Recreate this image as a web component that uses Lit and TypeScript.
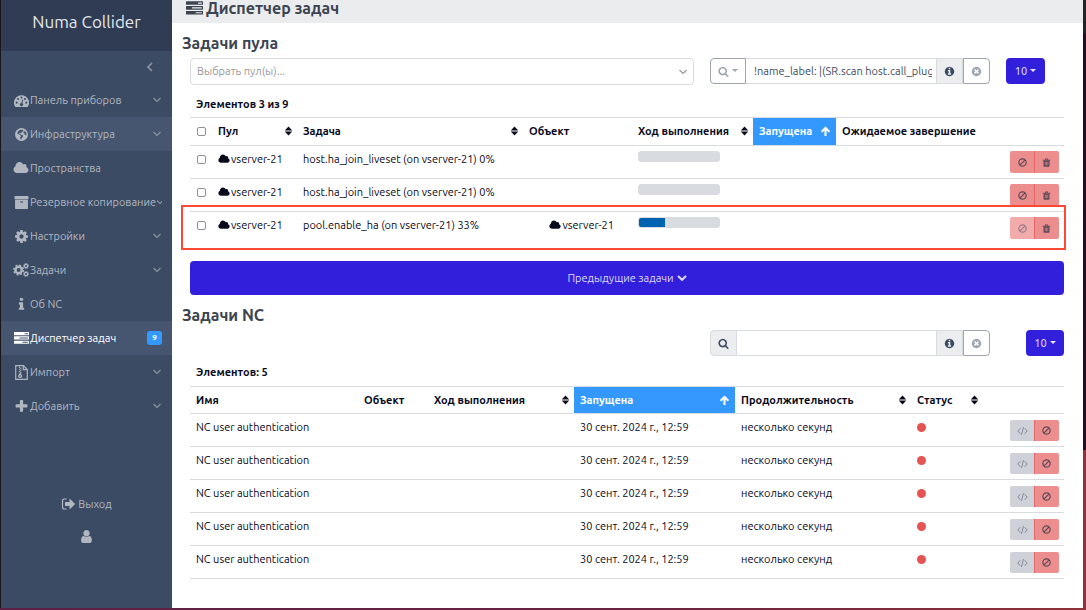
import { LitElement, html, css, svg, nothing } from "lit";
import { customElement, property } from "lit/decorators.js";
import { classMap } from "lit/directives/class-map.js";

const DISC = "M1664 896q0 209-103 385.5t-279.5 279.5-385.5 103-385.5-103-279.5-279.5-103-385.5 103-385.5 279.5-279.5 385.5-103 385.5 103 279.5 279.5 103 385.5z";

const ICONS: Record<string, { box?: string; art: unknown }> = {
  tasks: {
    art: svg`<path d="M1024 1408h640v-128h-640v128zm-384-512h1024v-128h-1024v128zm640-512h384v-128h-384v128zm512 832v256q0 26-19 45t-45 19h-1664q-26 0-45-19t-19-45v-256q0-26 19-45t45-19h1664q26 0 45 19t19 45zm0-512v256q0 26-19 45t-45 19h-1664q-26 0-45-19t-19-45v-256q0-26 19-45t45-19h1664q26 0 45 19t19 45zm0-512v256q0 26-19 45t-45 19h-1664q-26 0-45-19t-19-45v-256q0-26 19-45t45-19h1664q26 0 45 19t19 45z"/>`,
  },
  search: {
    art: svg`<path d="M1216 832q0-185-131.5-316.5t-316.5-131.5-316.5 131.5-131.5 316.5 131.5 316.5 316.5 131.5 316.5-131.5 131.5-316.5zm512 832q0 52-38 90t-90 38q-54 0-90-38l-343-342q-179 124-399 124-143 0-273.5-55.5t-225-150-150-225-55.5-273.5 55.5-273.5 150-225 225-150 273.5-55.5 273.5 55.5 225 150 150 225 55.5 273.5q0 220-124 399l343 343q37 37 37 90z"/>`,
  },
  cog: {
    art: svg`<path d="M1152 896q0-106-75-181t-181-75-181 75-75 181 75 181 181 75 181-75 75-181zm512-109v222q0 12-8 23t-20 13l-185 28q-19 54-39 91 35 50 107 138 10 12 10 25t-9 23q-27 37-99 108t-94 71q-12 0-26-9l-138-108q-44 23-91 38-16 136-29 186-7 28-36 28h-222q-14 0-24.5-8.5t-11.5-21.5l-28-184q-49-16-90-37l-141 107q-10 9-25 9-14 0-25-11-126-114-165-168-7-10-7-23 0-12 8-23 15-21 51-66.5t54-70.5q-27-50-41-99l-183-27q-13-2-21-12.5t-8-23.5v-222q0-12 8-23t19-13l186-28q14-46 39-92-40-57-107-138-10-12-10-24 0-10 9-23 26-36 98.5-107.5t94.5-71.5q13 0 26 10l138 107q44-23 91-38 16-136 29-186 7-28 36-28h222q14 0 24.5 8.5t11.5 21.5l28 184q49 16 90 37l142-107q9-9 24-9 13 0 25 10 129 119 165 170 7 8 7 22 0 12-8 23-15 21-51 66.5t-54 70.5q26 50 41 98l183 28q13 2 21 12.5t8 23.5z"/>`,
  },
  cogs: {
    box: "0 0 20 18",
    art: svg`<g fill="none" stroke="currentColor"><circle cx="7" cy="9" r="4" stroke-width="3"/><circle cx="7" cy="9" r="6" stroke-width="2" stroke-dasharray="2.4 2.31"/><circle cx="16.300" cy="4" r="2" stroke-width="1.500"/><circle cx="16.300" cy="4" r="3.200" stroke-width="1" stroke-dasharray="1.500 1.010"/><circle cx="16.300" cy="14" r="2" stroke-width="1.500"/><circle cx="16.300" cy="14" r="3.200" stroke-width="1" stroke-dasharray="1.500 1.010"/></g>`,
  },
  cloud: {
    box: "0 0 2048 1792",
    art: svg`<path d="M1984 1152q0 159-112.500 271.500t-271.500 112.500h-1088q-185 0-316.500-131.500t-131.500-316.500q0-132 71-241.500t187-163.500q-2-28-2-43 0-212 150-362t362-150q158 0 286.500 88t187.500 230q70-62 166-62 106 0 181 75t75 181q0 75-41 138 129 30 213 134.500t84 239.500z"/>`,
  },
  user: {
    art: svg`<path d="M1536 1399q0 109-62.500 187t-150.500 78h-854q-88 0-150.500-78t-62.500-187q0-85 8.500-160.500t31.500-152 58.500-131 94-89 134.500-34.500q131 128 313 128t313-128q76 0 134.500 34.500t94 89 58.500 131 31.500 152 8.500 160.500zm-256-887q0 159-112.500 271.500t-271.500 112.500-271.500-112.500-112.500-271.500 112.500-271.500 271.500-112.500 271.500 112.500 112.500 271.500z"/>`,
  },
  plus: {
    art: svg`<path d="M1600 736v192q0 40-28 68t-68 28h-416v416q0 40-28 68t-68 28h-192q-40 0-68-28t-28-68v-416h-416q-40 0-68-28t-28-68v-192q0-40 28-68t68-28h416v-416q0-40 28-68t68-28h192q40 0 68 28t28 68v416h416q40 0 68 28t28 68z"/>`,
  },
  info: {
    art: svg`<path d="M1216 1344v128q0 26-19 45t-45 19h-512q-26 0-45-19t-19-45v-128q0-26 19-45t45-19h64v-384h-64q-26 0-45-19t-19-45v-128q0-26 19-45t45-19h384q26 0 45 19t19 45v576h64q26 0 45 19t19 45zm-128-1152v192q0 26-19 45t-45 19h-256q-26 0-45-19t-19-45v-192q0-26 19-45t45-19h256q26 0 45 19t19 45z"/>`,
  },
  infoCircle: {
    art: svg`<path d="M1152 1376v-160q0-14-9-23t-23-9h-96v-512q0-14-9-23t-23-9h-320q-14 0-23 9t-9 23v160q0 14 9 23t23 9h96v320h-96q-14 0-23 9t-9 23v160q0 14 9 23t23 9h448q14 0 23-9t9-23zm-128-896v-160q0-14-9-23t-23-9h-192q-14 0-23 9t-9 23v160q0 14 9 23t23 9h192q14 0 23-9t9-23zm640 416q0 209-103 385.500t-279.500 279.500-385.500 103-385.500-103-279.500-279.500-103-385.500 103-385.500 279.500-279.500 385.500-103 385.500 103 279.500 279.500 103 385.500z"/>`,
  },
  timesCircle: {
    art: svg`<path d="M1277 1122q0-26-19-45l-181-181 181-181q19-19 19-45 0-27-19-46l-90-90q-19-19-46-19-26 0-45 19l-181 181-181-181q-19-19-45-19-27 0-46 19l-90 90q-19 19-19 46 0 26 19 45l181 181-181 181q-19 19-19 45 0 27 19 46l90 90q19 19 46 19 26 0 45-19l181-181 181 181q19 19 45 19 27 0 46-19l90-90q19-19 19-46zm387-226q0 209-103 385.500t-279.500 279.500-385.500 103-385.500-103-279.500-279.500-103-385.500 103-385.500 279.500-279.500 385.500-103 385.500 103 279.500 279.500 103 385.500z"/>`,
  },
  globe: {
    art: svg`<path fill-rule="evenodd" d="${DISC}M760 330l-200 110-130 190-20 190 180 60 190 130 30 150-90 130 60 170 110-60 170-240 40-130-140-70-180-60-150-60 20-110 130-20 60 60 40-120 190-140 60-90-110-100zM1180 520l-70 130 120 90 60 190 120 70 90-110-30-190-110-170z"/>`,
  },
  gauge: {
    art: svg`<path fill-rule="evenodd" d="M896 256a896 896 0 0 0-760 1370q20 38 60 38h1400q40 0 60-38A896 896 0 0 0 896 256z"/><g class="cut"><circle cx="320" cy="1150" r="120"/><circle cx="490" cy="720" r="120"/><circle cx="896" cy="530" r="120"/><circle cx="1300" cy="720" r="120"/><circle cx="1470" cy="1150" r="120"/><path d="M990 790l110 30-100 390a190 190 0 1 1-110-30z"/></g>`,
  },
  archive: {
    art: svg`<path d="M1088 832q0-26-19-45t-45-19h-256q-26 0-45 19t-19 45 19 45 45 19h256q26 0 45-19t19-45zm576-192v960q0 26-19 45t-45 19h-1408q-26 0-45-19t-19-45v-960q0-26 19-45t45-19h1408q26 0 45 19t19 45zm64-448v256q0 26-19 45t-45 19h-1536q-26 0-45-19t-19-45v-256q0-26 19-45t45-19h1536q26 0 45 19t19 45z"/>`,
  },
  zip: {
    box: "0 0 14 14",
    art: svg`<path d="M1.600.6h7.200l3.600 3.600v9.200H1.600zM8.700.8v3.500h3.500" fill="none" stroke="currentColor" stroke-width="1.100"/><path d="M4.500 1.500h1.200v1H4.500zM5.700 2.500h1.200v1H5.700zM4.500 3.500h1.200v1H4.500zM5.700 4.500h1.200v1H5.700zM4.500 5.500h1.200v1H4.500zM5.700 6.500h1.200v1H5.700z"/><path d="M5.700 7.800l1.300 2.600a1.300 1.200 0 1 1-2.600 0z" fill="none" stroke="currentColor" stroke-width="1.200"/>`,
  },
  signOut: {
    box: "0 0 14 14",
    art: svg`<path d="M5.500 2H3.200A1.700 1.700 0 0 0 1.500 3.700v6.600A1.700 1.700 0 0 0 3.200 12h2.300" fill="none" stroke="currentColor" stroke-width="1.200"/><path d="M4.500 5h4V2.200q0-.7.600-.3l4.600 4.700q.4.400 0 .8L9.100 12.100q-.6.400-.6-.3V9h-4q-.5 0-.5-.5v-3q0-.5.500-.5z"/>`,
  },
  ban: {
    box: "0 0 12 12",
    art: svg`<g fill="none" stroke="currentColor" stroke-width="1.600"><circle cx="6" cy="6" r="4.900"/><path d="M2.500 9.500l7-7"/></g>`,
  },
  trash: {
    box: "0 0 12 12",
    art: svg`<path d="M1 2.200h10v1.300H1zM4 .7h4v2H7V1.600H5v1.100H4z"/><path fill-rule="evenodd" d="M2 3.500h8v6.800q0 1.200-1.200 1.200H3.200Q2 11.500 2 10.300zM3.800 5v4.800h.8V5zM5.600 5v4.800h.8V5zM7.400 5v4.800h.8V5z"/>`,
  },
  code: {
    box: "0 0 14 12",
    art: svg`<path d="M4.200 2.500L1 6l3.200 3.500M9.800 2.500L13 6l-3.200 3.500M8.300 1l-2.600 10" fill="none" stroke="currentColor" stroke-width="1.200"/>`,
  },
  sort: { box: "0 0 12 14", art: svg`<path d="M6 1L11 6.200H1zM6 13L1 7.800h10z"/>` },
  arrowUp: {
    box: "0 0 12 12",
    art: svg`<path d="M6 11V2.500M1.800 6.300L6 2.100l4.200 4.200" fill="none" stroke="currentColor" stroke-width="2.300"/>`,
  },
  caret: { box: "0 0 6 4", art: svg`<path d="M0 0h6L3 3z"/>` },
  chevron: {
    box: "0 0 10 6",
    art: svg`<path d="M1.500 1L5 4.500 8.500 1" fill="none" stroke="currentColor" stroke-width="1.200"/>`,
  },
  chevronBold: {
    box: "0 0 10 8",
    art: svg`<path d="M1 2l4 3.800L9 2" fill="none" stroke="currentColor" stroke-width="2.200"/>`,
  },
  chevronLeft: {
    box: "0 0 8 10",
    art: svg`<path d="M6 1L2 5l4 4" fill="none" stroke="currentColor" stroke-width="1.700"/>`,
  },
};

@customElement("nc-icon")
export class NcIcon extends LitElement {
  @property() name = "";
  @property({ type: Number }) width = 12;
  @property({ type: Number }) height = 12;

  static styles = css`
    :host { display: inline-flex; flex: none; }
    svg { display: block; fill: currentColor; }
    .cut { fill: #3c4b64; }
  `;

  render() {
    const icon = ICONS[this.name];
    if (!icon) return nothing;
    return html`<svg width=${this.width} height=${this.height} viewBox=${icon.box ?? "0 0 1792 1792"} aria-hidden="true">${icon.art}</svg>`;
  }
}

const icon = (name: string, width = 12, height = width) =>
  html`<nc-icon name=${name} width=${width} height=${height}></nc-icon>`;

interface NavItem { icon: string; label: string; more?: boolean; lit?: boolean; current?: boolean; badge?: number; }

const NAV: NavItem[] = [
  { icon: "gauge", label: "Панель приборов", more: true },
  { icon: "globe", label: "Инфраструктура", more: true, lit: true },
  { icon: "cloud", label: "Пространства" },
  { icon: "archive", label: "Резервное копирование", more: true },
  { icon: "cog", label: "Настройки", more: true },
  { icon: "cogs", label: "Задачи", more: true },
  { icon: "info", label: "Об NC" },
  { icon: "tasks", label: "Диспетчер задач", lit: true, current: true, badge: 9 },
  { icon: "zip", label: "Импорт", more: true },
  { icon: "plus", label: "Добавить", more: true },
];

@customElement("nc-sidebar")
export class NcSidebar extends LitElement {
  static styles = css`
    :host { display: flex; flex-direction: column; background: #3c4b64; color: #b1b7c1; }
    .brand { background: #303c54; color: #e4e7eb; font-size: 17px; line-height: 20px; padding: 12px 0 19px; text-align: center; }
    .fold { display: flex; justify-content: flex-end; align-items: center; height: 32px; padding: 0 18px 0 0; border: 0; background: none; color: #8a93a2; }
    a { color: inherit; text-decoration: none; }
    .item { display: flex; align-items: center; gap: 1px; height: 34px; padding: 0 10px 0 12px; white-space: nowrap; }
    .glyph { display: flex; justify-content: center; width: 16px; flex: none; }
    .label { flex: 1 0 auto; }
    .more { display: flex; justify-content: center; flex: 0 1 10px; min-width: 4px; overflow: hidden; color: #8a93a2; }
    .lit { background: #475670; }
    .current { color: #ffffff; }
    .badge { background: #3399ff; border-radius: 3px; color: #ffffff; font-size: 8px; font-weight: 700; line-height: 14px; width: 15px; text-align: center; }
    .foot { display: flex; flex-direction: column; align-items: center; gap: 16px; margin-top: auto; padding-bottom: 64px; line-height: 16px; }
    .exit { display: flex; align-items: center; gap: 3px; }
    .who { display: flex; height: 16px; align-items: center; }
  `;

  render() {
    return html`
      <div class="brand">Numa Collider</div>
      <button class="fold" aria-label="Свернуть меню">${icon("chevronLeft", 8, 10)}</button>
      <nav>
        ${NAV.map(
          (n) => html`<a href="#" class=${classMap({ item: true, lit: !!n.lit, current: !!n.current })}>
            <span class="glyph">${icon(n.icon, n.icon === "cloud" || n.icon === "cogs" ? 16 : 15)}</span>
            <span class="label">${n.label}</span>
            ${n.more ? html`<span class="more">${icon("chevron", 10, 6)}</span>` : nothing}
            ${n.badge ? html`<span class="badge">${n.badge}</span>` : nothing}
          </a>`,
        )}
      </nav>
      <div class="foot">
        <a class="exit" href="#">${icon("signOut", 14)}<span>Выход</span></a>
        <a class="who" href="#" aria-label="Пользователь">${icon("user", 15)}</a>
      </div>
    `;
  }
}

interface Column { label: string; cls: string; sort?: "both" | "up"; }

const POOL_COLUMNS: Column[] = [
  { label: "Пул", cls: "p-pool", sort: "both" },
  { label: "Задача", cls: "p-task", sort: "both" },
  { label: "Объект", cls: "p-object" },
  { label: "Ход выполнения", cls: "p-progress", sort: "both" },
  { label: "Запущена", cls: "p-start", sort: "up" },
  { label: "Ожидаемое завершение", cls: "p-end" },
];

const NC_COLUMNS: Column[] = [
  { label: "Имя", cls: "n-name" },
  { label: "Объект", cls: "n-object" },
  { label: "Ход выполнения", cls: "n-progress", sort: "both" },
  { label: "Запущена", cls: "n-start", sort: "up" },
  { label: "Продолжительность", cls: "n-time", sort: "both" },
  { label: "Статус", cls: "n-status", sort: "both" },
];

const POOL_TASKS = [
  { pool: "vserver-21", task: "host.ha_join_liveset (on vserver-21) 0%", object: "", done: 0, locked: false },
  { pool: "vserver-21", task: "host.ha_join_liveset (on vserver-21) 0%", object: "", done: 0, locked: false },
  { pool: "vserver-21", task: "pool.enable_ha (on vserver-21) 33%", object: "vserver-21", done: 33, locked: true },
];

const NC_TASKS = Array.from({ length: 5 }, () => ({
  name: "NC user authentication",
  start: "30 сент. 2024 г., 12:59",
  time: "несколько секунд",
}));

@customElement("app-root")
export class AppRoot extends LitElement {
  static styles = css`
    :host {
      display: grid;
      grid-template-columns: 171px minmax(0, 1fr);
      box-sizing: border-box;
      min-height: 100vh;
      padding: 0 3px 2px 1px;
      font: 11px/16px Ubuntu, "Noto Sans", sans-serif;
      color: #080a1c;
      background:
        linear-gradient(90deg, #5c1f45, #6a2440 60%, #8f3138) bottom / 100% 2px no-repeat,
        linear-gradient(#222428 33px, #2c0a24 33px, #2c0a24 450px, #8f3138 450px) right / 3px 100% no-repeat,
        #1c1418;
    }
    * { box-sizing: border-box; }
    button, input, select { font: inherit; color: inherit; margin: 0; }
    main { background: #ffffff; min-width: 0; }
    .title { display: flex; align-items: center; gap: 3px; height: 23px; padding: 0 14px 7px; background: #ebecee; color: #3c4450; }
    h1, h2 { margin: 0; font-weight: 600; color: #3c4450; }
    h1 { font-size: 16px; line-height: 20px; }
    h2 { font-size: 16px; line-height: 20px; padding-left: 10px; }
    .pool { padding-top: 10px; }
    .nc { padding-top: 10px; }
    .body { padding: 0 19px 0 18px; }
    .bar { display: flex; gap: 16px; align-items: flex-start; }
    .pool .bar { padding: 5px 19px 0 0; }
    .nc .bar { padding-top: 5px; justify-content: flex-end; }
    .nc .group { margin-right: 20px; }
    .picker { display: flex; align-items: center; flex: 1; height: 27px; border: 1px solid #d8dbe0; border-radius: 4px; padding-right: 5px; color: #999999; }
    .picker select { flex: 1; height: 100%; appearance: none; border: 0; background: none; padding: 0 6px 2px; }
    .group { display: flex; width: 280px; height: 26px; color: #3c4b64; }
    .group > * { display: flex; align-items: center; justify-content: center; border: 1px solid #d8dbe0; background: #ebedef; padding: 0; }
    .group > :first-child { border-radius: 4px 0 0 4px; }
    .group .clear { width: 27px; border-color: #9da5b1; border-radius: 0 4px 4px 0; background: #ffffff; color: #9da5b1; }
    .group .help, .group .find { width: 27px; }
    .group .filter { width: 36px; gap: 3px; border-color: #9da5b1; background: #ffffff; color: #9da5b1; }
    .group input { flex: 1; min-width: 0; border-width: 1px 0; background: #ffffff; padding: 0 4px 0 8px; }
    .size { display: flex; align-items: center; justify-content: center; gap: 3px; width: 39px; height: 26px; border: 0; border-radius: 4px; background: #321fdb; color: #e8e6fb; }
    .nc .size { width: 38px; }
    .count { margin: 0; padding: 11px 6px 5px; font-weight: 700; }
    .nc .count { padding: 8px 6px 6px; }
    .frame { position: relative; }
    .mark { position: absolute; top: 88px; right: -2px; bottom: -5px; left: -9px; border: 2px solid #fb4934; pointer-events: none; }
    table { width: 100%; table-layout: fixed; border-collapse: separate; border-spacing: 0; border-top: 1px solid #d8dbe0; }
    th, td { padding: 5px 6px; border-bottom: 1px solid #d8dbe0; text-align: left; vertical-align: top; white-space: nowrap; }
    th { height: 28px; padding: 0 4px 1px 6px; vertical-align: middle; }
    .nc th { height: 27px; padding-bottom: 0; }
    td { height: 33px; }
    .frame tbody tr:last-child td { border-bottom-color: transparent; }
    .head { display: flex; align-items: center; justify-content: space-between; width: 100%; border: 0; background: none; padding: 0; font-weight: 700; }
    .sorted { background: #3399ff; color: #ffffff; }
    .sorted .head { padding-right: 1px; }
    .p-check { width: 22px; }
    .p-pool { width: 85px; }
    .p-task { width: 226px; }
    .p-object { width: 109px; }
    .p-progress { width: 121px; }
    .p-start { width: 83px; }
    .p-end { width: 150px; }
    .n-name { width: 168px; }
    .n-object { width: 70px; }
    .n-progress { width: 146px; }
    .n-start { width: 161px; }
    .n-time { width: 176px; }
    .n-status { width: 72px; }
    .tick { appearance: none; display: block; width: 9px; height: 9px; margin: 4px 1px; border: 1px solid #8f8f9d; border-radius: 2px; background: #ffffff; }
    .tag { display: flex; align-items: center; gap: 1px; }
    .owner { justify-content: flex-end; padding-right: 12px; }
    .track { width: 82px; height: 11px; border: 1px solid #d8dbe0; border-radius: 3px; background: #d8dbe0; overflow: hidden; }
    .fill { height: 100%; background: #0063b1; }
    td.acts { padding: 5px 5px 4px 0; }
    .pair { display: flex; justify-content: flex-end; }
    .pair button { display: flex; align-items: center; justify-content: center; width: 24px; height: 22px; padding: 0; border: 0; background: #ed8e8e; color: #5c4a58; }
    .pair button:first-child { border-radius: 2px 0 0 2px; }
    .pair button:last-child { width: 25px; box-shadow: inset 1px 0 #e66767; border-radius: 0 2px 2px 0; }
    .pair .locked { background: #f2abab; color: #9c7c84; }
    .pair .code { background: #ced2d8; color: #7d8696; }
    .nc td.acts { padding-top: 6px; }
    .nc .pair button { height: 21px; }
    .dot { width: 9px; height: 9px; margin: 4px 0 0; border-radius: 50%; background: #e55353; }
    .earlier { display: flex; align-items: center; justify-content: center; gap: 3px; width: 100%; height: 34px; margin-top: 16px; border: 0; border-radius: 4px; background: #321fdb; color: #dcd9f8; }
  `;

  private head(columns: Column[]) {
    return columns.map(
      (c) => html`<th scope="col" class=${classMap({ [c.cls]: true, sorted: c.sort === "up" })}>
        ${c.sort
          ? html`<button class="head"><span>${c.label}</span>${c.sort === "up" ? icon("arrowUp", 11) : icon("sort", 9, 12)}</button>`
          : c.label}
      </th>`,
    );
  }

  render() {
    return html`
      <nc-sidebar></nc-sidebar>
      <main>
        <header class="title">${icon("tasks", 17)}<h1>Диспетчер задач</h1></header>

        <section class="pool">
          <h2>Задачи пула</h2>
          <div class="body">
            <div class="bar">
              <div class="picker">
                <select aria-label="Выбрать пул(ы)"><option>Выбрать пул(ы)...</option></select>
                ${icon("chevron", 10, 6)}
              </div>
              <div class="group">
                <button class="filter" aria-label="Фильтр">${icon("search", 11)}${icon("caret", 6, 4)}</button>
                <input aria-label="Поиск задач пула" value="!name_label: |(SR.scan host.call_plugin)" />
                <span class="help">${icon("infoCircle", 11)}</span>
                <button class="clear" aria-label="Очистить">${icon("timesCircle", 11)}</button>
              </div>
              <button class="size">10 ${icon("caret", 6, 4)}</button>
            </div>
            <p class="count">Элементов 3 из 9</p>
            <div class="frame">
              <table>
                <thead>
                  <tr>
                    <th class="p-check"><input class="tick" type="checkbox" aria-label="Выбрать все" /></th>
                    ${this.head(POOL_COLUMNS)}
                    <th></th>
                  </tr>
                </thead>
                <tbody>
                  ${POOL_TASKS.map(
                    (t) => html`<tr>
                      <td><input class="tick" type="checkbox" aria-label=${t.task} /></td>
                      <td><span class="tag">${icon("cloud", 12)}${t.pool}</span></td>
                      <td>${t.task}</td>
                      <td>${t.object ? html`<span class="tag owner">${icon("cloud", 12)}${t.object}</span>` : nothing}</td>
                      <td><div class="track"><div class="fill" style="width:${t.done}%"></div></div></td>
                      <td></td>
                      <td></td>
                      <td class="acts">
                        <div class="pair">
                          <button class=${classMap({ locked: t.locked })} aria-label="Отменить">${icon("ban", 9)}</button>
                          <button aria-label="Удалить">${icon("trash", 9)}</button>
                        </div>
                      </td>
                    </tr>`,
                  )}
                </tbody>
              </table>
              <div class="mark"></div>
            </div>
            <button class="earlier">Предыдущие задачи ${icon("chevronBold", 10, 8)}</button>
          </div>
        </section>

        <section class="nc">
          <h2>Задачи NC</h2>
          <div class="body">
            <div class="bar">
              <div class="group">
                <span class="find">${icon("search", 11)}</span>
                <input aria-label="Поиск задач NC" />
                <span class="help">${icon("infoCircle", 11)}</span>
                <button class="clear" aria-label="Очистить">${icon("timesCircle", 11)}</button>
              </div>
              <button class="size">10 ${icon("caret", 6, 4)}</button>
            </div>
            <p class="count">Элементов: 5</p>
            <table>
              <thead>
                <tr>${this.head(NC_COLUMNS)}<th></th></tr>
              </thead>
              <tbody>
                ${NC_TASKS.map(
                  (t) => html`<tr>
                    <td>${t.name}</td>
                    <td></td>
                    <td></td>
                    <td>${t.start}</td>
                    <td>${t.time}</td>
                    <td><div class="dot" role="img" aria-label="Ошибка"></div></td>
                    <td class="acts">
                      <div class="pair">
                        <button class="code" aria-label="Показать">${icon("code", 11, 10)}</button>
                        <button aria-label="Отменить">${icon("ban", 9)}</button>
                      </div>
                    </td>
                  </tr>`,
                )}
              </tbody>
            </table>
          </div>
        </section>
      </main>
    `;
  }
}
